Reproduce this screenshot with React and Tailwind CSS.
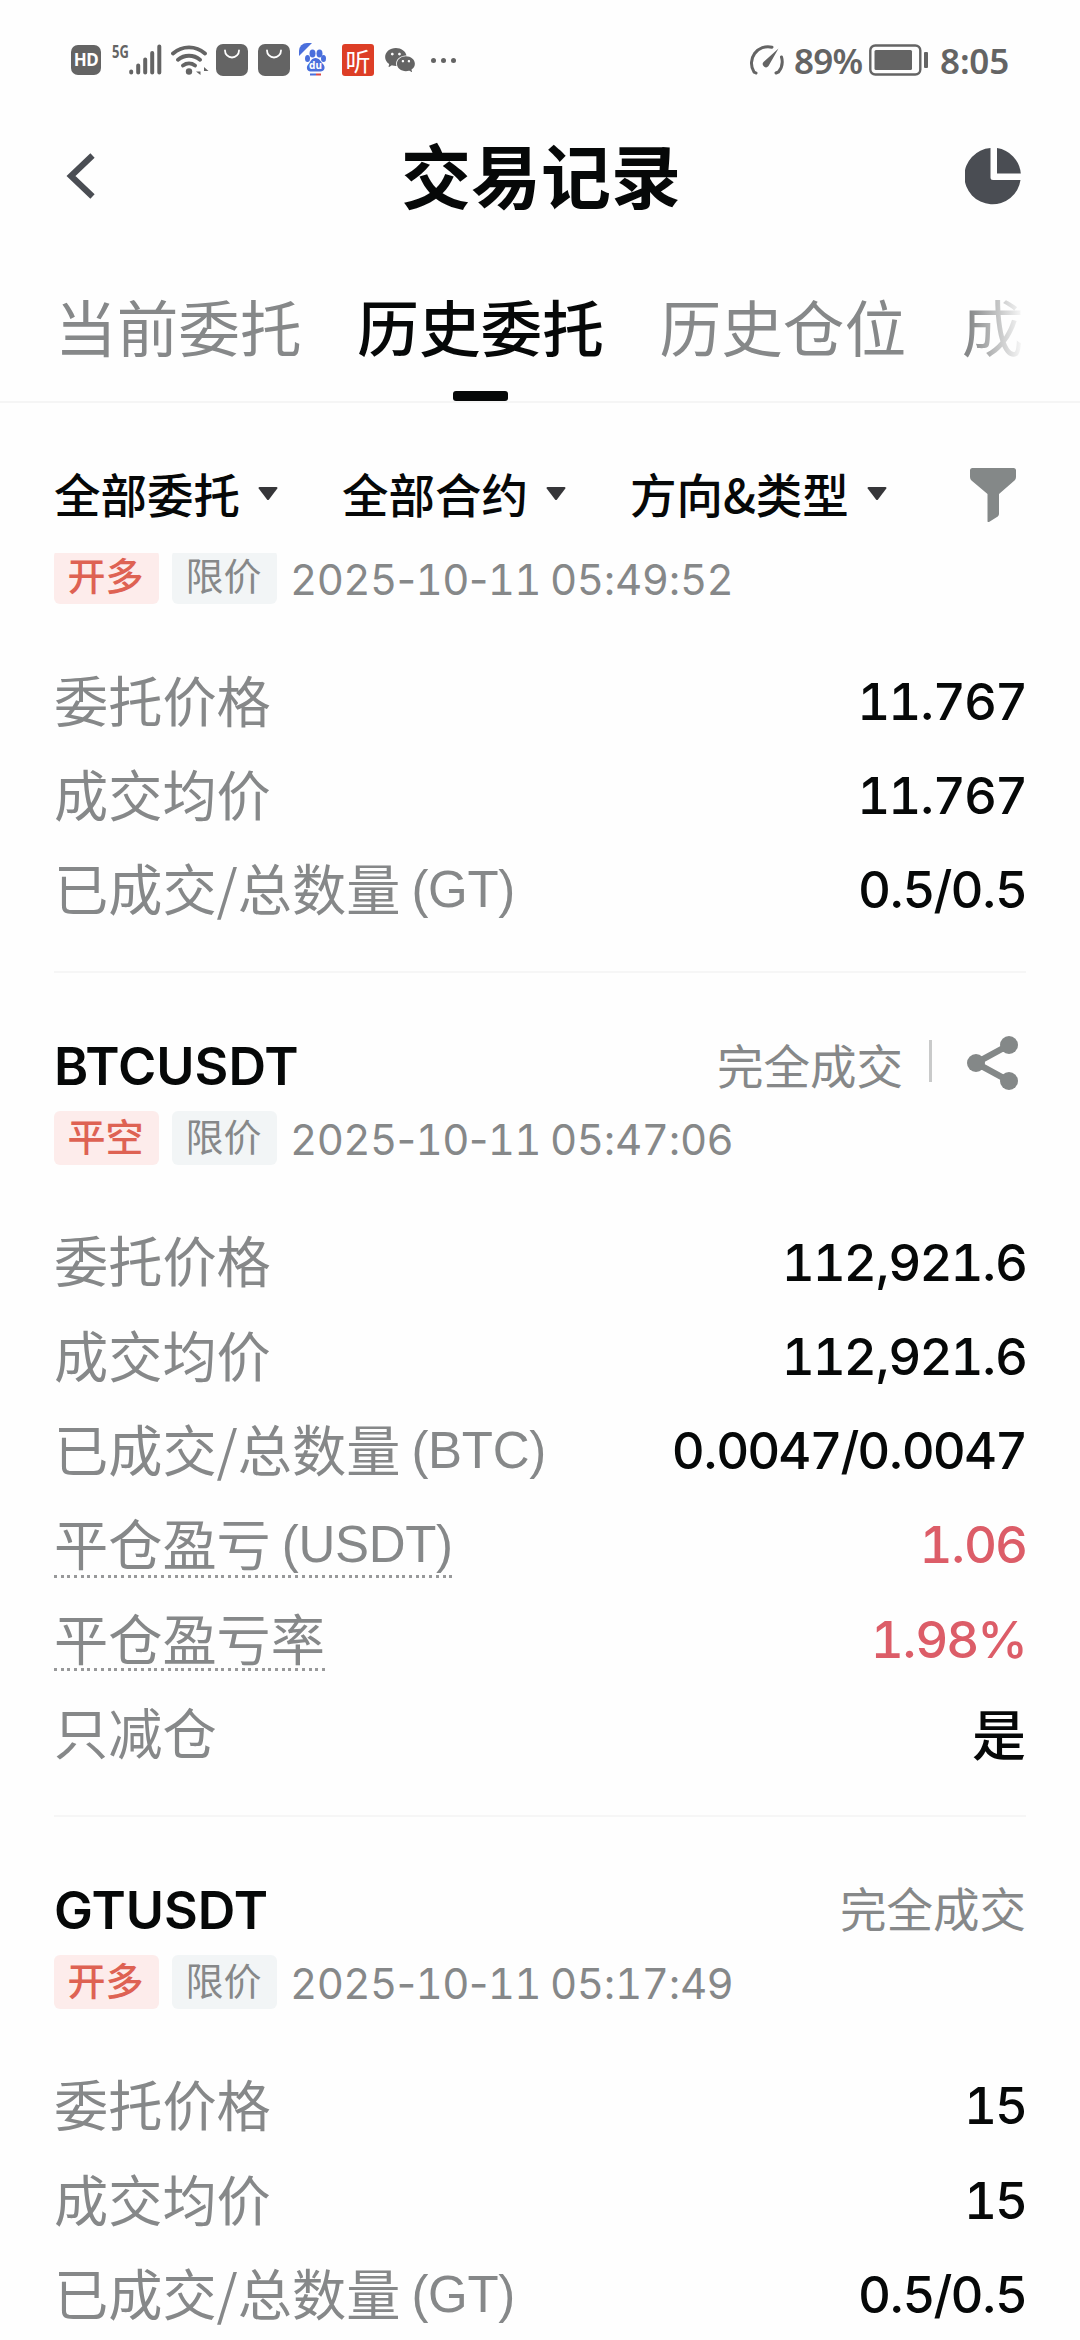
import { AiFillWechat } from "react-icons/ai";

const tabs = ["当前委托", "历史委托", "历史仓位", "成交"];

const filters = ["全部委托", "全部合约", "方向&类型"];

const orders = [
  {
    side: "开多",
    type: "限价",
    date: "2025-10-11",
    time: "05:49:52",
    rows: [
      { label: "委托价格", value: "11.767" },
      { label: "成交均价", value: "11.767" },
      { label: "已成交/总数量", unit: "(GT)", value: "0.5/0.5" },
    ],
  },
  {
    symbol: "BTCUSDT",
    status: "完全成交",
    share: true,
    side: "平空",
    type: "限价",
    date: "2025-10-11",
    time: "05:47:06",
    rows: [
      { label: "委托价格", value: "112,921.6" },
      { label: "成交均价", value: "112,921.6" },
      { label: "已成交/总数量", unit: "(BTC)", value: "0.0047/0.0047" },
      { label: "平仓盈亏", unit: "(USDT)", value: "1.06", hint: true, red: true },
      { label: "平仓盈亏率", value: "1.98%", hint: true, red: true },
      { label: "只减仓", value: "是", cjk: true },
    ],
  },
  {
    symbol: "GTUSDT",
    status: "完全成交",
    side: "开多",
    type: "限价",
    date: "2025-10-11",
    time: "05:17:49",
    rows: [
      { label: "委托价格", value: "15" },
      { label: "成交均价", value: "15" },
      { label: "已成交/总数量", unit: "(GT)", value: "0.5/0.5" },
    ],
  },
];

// tabular digits, proportional punctuation
const Digits = ({ text }) => (
  <span>
    {text.split(/(\d+)/).map((part, i) => (
      <span key={i} className={i % 2 ? "tabular-nums" : "normal-nums"}>{part}</span>
    ))}
  </span>
);

const BagIcon = () => (
  <svg width="32" height="32" viewBox="0 0 32 32">
    <rect width="32" height="32" rx="7" fill="#646464" />
    <path d="M9 6.500a7 7 0 0 0 14 0" fill="none" stroke="#fff" strokeWidth="1.800" strokeLinecap="round" />
  </svg>
);

const StatusBar = () => (
  <div className="flex h-[120px] items-center pl-[71px] pr-[71px] text-[#646464]">
    <div className="flex h-[30px] w-[30px] items-center justify-center rounded-[7px] bg-[#646464] font-['Noto_Sans'] text-[17px] font-bold tracking-[-0.5px] text-white">
      HD
    </div>
    <div className="ml-[11px] flex h-[32px] items-start">
      <span className="w-[17px] origin-left scale-x-[0.72] font-['Noto_Sans'] text-[18px] leading-[14px] font-bold">5G</span>
      <svg width="33" height="32" viewBox="0 0 33 32" stroke="#646464" strokeWidth="4" strokeLinecap="round">
        <path d="M2.200 27.500v1M9.200 21.500v7M16.200 15.500v13M23.200 9v19.500M30.300 2.500v26" />
      </svg>
    </div>
    <svg className="ml-[9px]" width="38" height="32" viewBox="0 0 38 32" fill="none" stroke="#646464" strokeWidth="3.800" strokeLinecap="round">
      <path d="M2 9.500a24 24 0 0 1 32 0M7 15.800a17 17 0 0 1 22 0M12 21.500a10 10 0 0 1 12 0" />
      <circle cx="18" cy="27.500" r="3.200" fill="#646464" stroke="none" />
      <path d="M29.500 23v8l-4.500-3.500h4.500zM33 31v-8l4.500 4H33z" fill="#646464" stroke="none" />
    </svg>
    <div className="ml-[7px] flex gap-[10px]">
      <BagIcon />
      <BagIcon />
    </div>
    <svg className="ml-[9px]" width="28" height="34" viewBox="0 0 28 34">
      <g fill="#4a6fdc">
        <path d="M0 13V8a8 8 0 0 1 8-8h5z" />
        <ellipse cx="13.500" cy="10.500" rx="3" ry="4" />
        <ellipse cx="20.500" cy="10.500" rx="3" ry="4" />
        <ellipse cx="8.500" cy="15.500" rx="2.500" ry="3.500" />
        <ellipse cx="24.500" cy="15.500" rx="2.500" ry="3.500" />
        <path d="M16.500 15c-4 0-5 4-7 6-3 3-1.500 7.500 2 7.500h10c4 0 5.500-4.500 2.500-7.500-2-2-3.500-6-7.500-6z" />
        <rect x="11" y="30.500" width="6" height="2" />
      </g>
      <rect x="17" y="30.500" width="5" height="2" fill="#d94a4a" />
      <text x="16.500" y="26" textAnchor="middle" fontSize="10" fontWeight="700" fontFamily="Noto Sans" fill="#fff">du</text>
    </svg>
    <div className="ml-[15px] flex h-[32px] w-[32px] items-center justify-center rounded-[3px] bg-[#dd3e26] font-['Noto_Sans_CJK_SC'] text-[25px] leading-[30px] text-white">
      听
    </div>
    <AiFillWechat className="ml-[9px] size-[34px]" />
    <div className="ml-[14px] flex gap-[5px]">
      <i className="size-[5px] rounded-full bg-[#646464]" />
      <i className="size-[5px] rounded-full bg-[#646464]" />
      <i className="size-[5px] rounded-full bg-[#646464]" />
    </div>

    <div className="ml-auto flex items-center font-['Noto_Sans'] text-[35px] leading-none font-semibold">
      <svg width="37" height="32" viewBox="0 0 37 32" fill="none" stroke="#646464" strokeWidth="3" strokeLinecap="round">
        <path d="M8 29l-2-1A16.500 16.500 0 0 1 24 3.200M33.500 13a16.500 16.500 0 0 1-3 15l-2.500 1" />
        <path d="M30.500 4.500L20.500 22a3.200 3.200 0 1 1-5-4z" fill="#646464" stroke="none" />
      </svg>
      <span className="ml-[9px] w-[75px] tracking-[-0.8px]">89%</span>
      <svg width="60" height="32" viewBox="0 0 60 32">
        <rect x="1.300" y="1.500" width="50" height="29" rx="5" fill="none" stroke="#646464" strokeWidth="2.400" />
        <rect x="5.500" y="6" width="37.500" height="20" rx="1.500" fill="#646464" />
        <rect x="55" y="8" width="4" height="16" rx="1" fill="#646464" />
      </svg>
      <span className="ml-[11px] tracking-[-0.2px]">8:05</span>
    </div>
  </div>
);

const Header = () => (
  <div className="mb-[4px] flex h-[112px] items-center justify-between pl-[66px] pr-[59px]">
    <svg width="56" height="46" viewBox="0 0 56 46" fill="none" stroke="#4a4d53" strokeWidth="6.200">
      <path d="M26.500 2.500L5 23l21.500 20.500" />
    </svg>
    <h1 className="-mt-[4px] mr-[5px] text-[70px] leading-none font-bold">交易记录</h1>
    <svg width="56" height="58" viewBox="0 0 56 58" fill="#4a4d53">
      <path d="M25.500 1a28.200 28.200 0 1 0 30 32H28a2.500 2.500 0 0 1-2.500-2.500z" />
      <path d="M32 1a28.200 28.200 0 0 1 23.800 25.500H32z" />
    </svg>
  </div>
);

const Caret = () => (
  <svg className="mt-[2px]" width="20" height="14" viewBox="0 0 20 14" fill="#363639">
    <path d="M1.500 0h17q1.500 0 .8 1.500l-8.300 11q-1 1-2 0L.7 1.500Q0 0 1.500 0z" />
  </svg>
);

const OrderRow = ({ row }) => (
  <div className="flex h-[94.300px] items-center justify-between">
    <div className="relative flex items-center pb-[3px] text-[54.200px] leading-none text-[#868889]">
      {row.label}
      {row.unit && (
        <span className="mt-[5px] ml-[11px] mr-[2px] font-['Liberation_Sans'] text-[51px] leading-none tracking-[-0.3px]">{row.unit}</span>
      )}
      {row.hint && (
        <i className={`absolute left-0 h-[3px] w-full bg-[repeating-linear-gradient(90deg,#98999a_0_3px,transparent_3px_6.700px)] ${row.unit ? "top-[61px]" : "top-[58px]"}`} />
      )}
    </div>
    {row.cjk ? (
      <span className="text-[54px] leading-none font-medium">{row.value}</span>
    ) : (
      <span className={`pt-[2px] font-[Inter] text-[51px] leading-none font-medium tracking-[-2px] ${row.red ? "text-[#dc5d68]" : "text-[#060808]"}`}>
        <Digits text={row.value} />
      </span>
    )}
  </div>
);

const OrderCard = ({ order }) => (
  <div className="border-b-2 border-[#f6f6f6] pb-[35px]">
    {order.symbol && (
      <div className="mt-[56px] mb-[10px] flex h-[72px] items-center justify-between">
        <span className="pt-[4px] font-[Inter] text-[52px] leading-none font-semibold">{order.symbol}</span>
        <div className="flex items-center pb-[2px] text-[46.500px] leading-none text-[#868889]">
          {order.status}
          {order.share && (
            <>
              <i className="-mt-[6px] ml-[26px] h-[42px] w-[3px] bg-[#c9caca]" />
              <svg className="-mt-[2px] mr-[7px] ml-[35px]" width="52" height="54" viewBox="0 0 52 54" fill="#848888">
                <path d="M42 9L9 27l33 18" fill="none" stroke="#848888" strokeWidth="6.500" />
                <circle cx="42" cy="9" r="9" />
                <circle cx="9" cy="27" r="9" />
                <circle cx="42" cy="45" r="9" />
              </svg>
            </>
          )}
        </div>
      </div>
    )}
    <div className="mb-[49px] flex h-[54px] items-center text-[38px] leading-none">
      <span className="flex h-[54px] w-[105px] items-start justify-center rounded-[6px] bg-[#fdeceb] pt-[5px] pr-[2px] font-medium text-[#de6253]">{order.side}</span>
      <span className="ml-[13px] flex h-[54px] w-[105px] items-start justify-center rounded-[6px] bg-[#f2f5f6] pt-[5px] pr-[2px] text-[#868889]">{order.type}</span>
      <span className="ml-[13px] flex gap-[9px] pt-[5px] font-[Inter] text-[42px] tracking-[-0.550px] text-[#868889]">
        <Digits text={order.date} />
        <Digits text={order.time} />
      </span>
    </div>
    {order.rows.map((row) => (
      <OrderRow key={row.label} row={row} />
    ))}
  </div>
);

export default function App() {
  return (
    <div className="h-[2340px] w-[1080px] overflow-hidden bg-[#fefefe] font-['Noto_Sans_CJK_SC',sans-serif] text-[#060808]">
      <StatusBar />
      <Header />

      <div className="h-[167px] border-b-2 border-[#f5f5f5] pl-[55px]">
        <div className="relative flex h-full w-[970px] gap-[55.500px] overflow-hidden text-[61.700px] leading-none">
          {tabs.map((tab, i) => (
            <div
              key={tab}
              className={`flex h-full shrink-0 flex-col items-center justify-between pt-[59px] ${i === 1 ? "font-medium" : "text-[#868889]"}`}
            >
              {tab}
              {i === 1 && <i className="h-[10px] w-[55px] rounded-[3px] bg-[#060808]" />}
            </div>
          ))}
          <div className="absolute right-0 h-full w-[56px] bg-linear-to-r from-transparent to-[#fefefe]" />
        </div>
      </div>

      <div className="flex h-[150px] items-start pt-[62px] pl-[54px] pr-[64px] text-[46.500px] leading-[56px] font-medium">
        {filters.map((name) => (
          <div key={name} className="mr-[64px] flex items-center gap-[18px]">
            {name}
            <Caret />
          </div>
        ))}
        <svg className="mt-[3px] ml-auto" width="46" height="54" viewBox="0 0 46 54" fill="#848888">
          <path d="M2.500 0h41Q46 0 46 2.500V9q0 2-1.500 3.500L29 26v20q0 1.500-1.200 2.400L19 54q-1.500.6-1.500-1V26L1.500 12.500Q0 11 0 9V2.500Q0 0 2.500 0z" />
        </svg>
      </div>

      <div className="overflow-hidden px-[54px]">
        <div className="-mt-[3px]">
          {orders.map((order) => (
            <OrderCard key={order.time} order={order} />
          ))}
        </div>
      </div>
    </div>
  );
}
